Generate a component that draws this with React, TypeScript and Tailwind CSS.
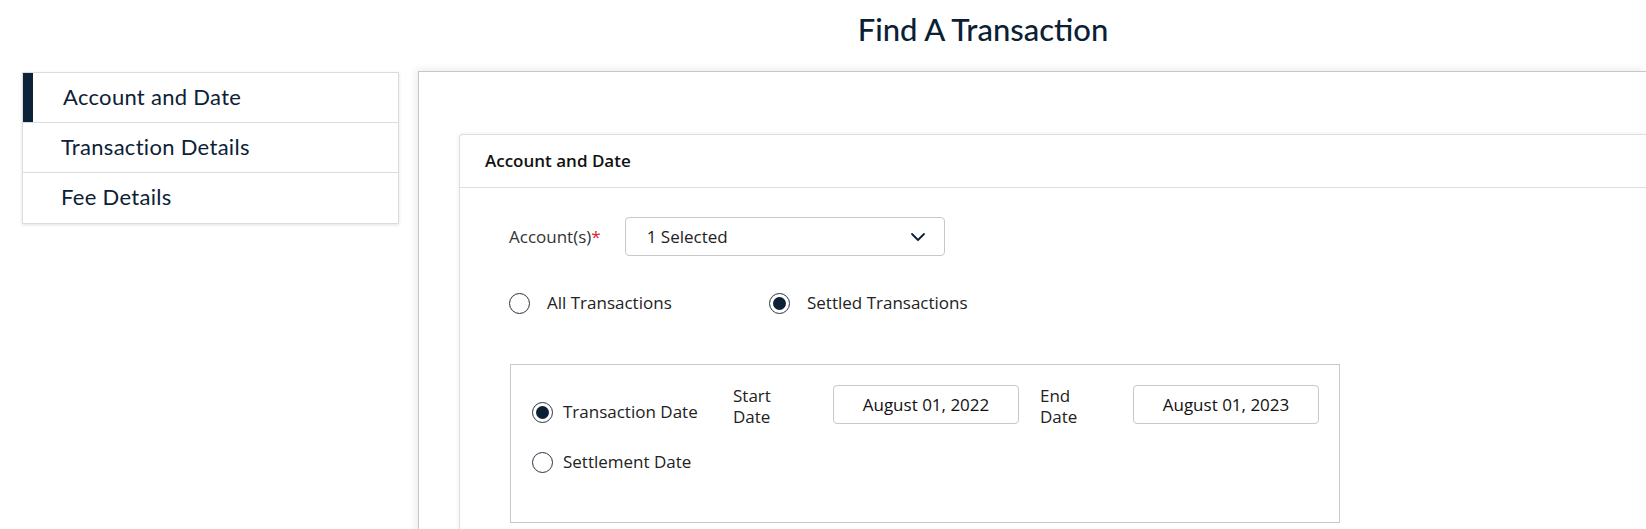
import { ChevronDown } from "lucide-react";

const sideItems = ["Account and Date", "Transaction Details", "Fee Details"];

function Radio({
  checked,
  label,
  className = "",
  gap = "gap-[17px]",
}: {
  checked?: boolean;
  label: string;
  className?: string;
  gap?: string;
}) {
  return (
    <label className={`flex h-[24px] items-center ${gap} ${className}`}>
      <span className="flex h-[21px] w-[21px] shrink-0 items-center justify-center rounded-full border-[1.5px] border-[#2b3340] bg-white">
        {checked && <span className="h-[13px] w-[13px] rounded-full bg-[#0b1f35]" />}
      </span>
      <span>{label}</span>
    </label>
  );
}

function DateInput({ value }: { value: string }) {
  return (
    <div className="flex h-[39px] w-[186px] items-center justify-center rounded-[4px] border border-[#c8c8c8] text-[#111]">
      {value}
    </div>
  );
}

export default function App() {
  return (
    <div className="min-h-screen overflow-hidden bg-white">
      <div className="grid grid-cols-[396px_1fr] pl-[22px]">
        {/* Title row */}
        <div />
        <h1 className="h-[71px] pr-[98px] pt-[6px] text-center font-['Lato',sans-serif] text-[31px] font-medium leading-[1.5] text-[#0b1f35]">
          Find A Transaction
        </h1>

        {/* Sidebar */}
        <div className="pt-[1px]">
          <nav className="w-[377px] border border-[#dcdcdc] bg-white font-['Lato',sans-serif] text-[22px] tracking-[0.3px] text-[#0d2136] shadow-[0_1px_3px_rgba(0,0,0,0.12)]">
            {sideItems.map((item, i) => (
              <div
                key={item}
                className={`flex h-[50px] items-center ${i < sideItems.length - 1 ? "border-b border-[#dcdcdc]" : ""}`}
              >
                {i === 0 ? (
                  <>
                    <span className="h-full w-[10px] bg-[#0b2239]" />
                    <span className="pb-[3px] pl-[30px]">{item}</span>
                  </>
                ) : (
                  <span className="pb-[3px] pl-[38px]">{item}</span>
                )}
              </div>
            ))}
          </nav>
        </div>

        {/* Main panel */}
        <div className="min-h-[470px] border border-r-0 border-[#c8c8c8] bg-white pl-[40px] pt-[62px] shadow-[-2px_-2px_8px_rgba(0,0,0,0.08)]">
          <div className="min-h-[400px] rounded-tl-[4px] border border-r-0 border-[#dedede] font-['Open_Sans',sans-serif] text-[17px] text-[#222] shadow-[-1px_-1px_4px_rgba(0,0,0,0.05)]">
            <div className="flex h-[53px] items-center border-b border-[#dedede] px-[25px] text-[17px] font-semibold text-[#111]">
              Account and Date
            </div>

            <div className="pl-[49px] pt-[29px]">
              <div className="flex items-center gap-[24px]">
                <span className="text-[#333]">
                  Account(s)<span className="text-[#e0202a]">*</span>
                </span>
                <button
                  type="button"
                  className="flex h-[39px] w-[320px] items-center justify-between rounded-[4px] border border-[#c8c8c8] pl-[21px] pr-[14px] text-[#222]"
                >
                  <span>1 Selected</span>
                  <ChevronDown className="h-[24px] w-[24px] text-[#0b1f35]" strokeWidth={1.8} />
                </button>
              </div>

              <div className="mt-[35px] flex items-center">
                <Radio label="All Transactions" className="w-[260px]" />
                <Radio checked label="Settled Transactions" />
              </div>

              <div className="ml-[1px] mt-[49px] flex h-[159px] w-[830px] items-start border border-[#c8c8c8] pl-[21px] pt-[20px]">
                <div className="flex w-[201px] flex-col gap-[26px] pt-[15px]">
                  <Radio checked label="Transaction Date" gap="gap-[10px]" />
                  <Radio label="Settlement Date" gap="gap-[10px]" />
                </div>
                <div className="w-[100px] leading-[21px]">
                  Start
                  <br />
                  Date
                </div>
                <DateInput value="August 01, 2022" />
                <div className="ml-[21px] w-[93px] leading-[21px]">
                  End
                  <br />
                  Date
                </div>
                <DateInput value="August 01, 2023" />
              </div>
            </div>
          </div>
        </div>
      </div>
    </div>
  );
}
